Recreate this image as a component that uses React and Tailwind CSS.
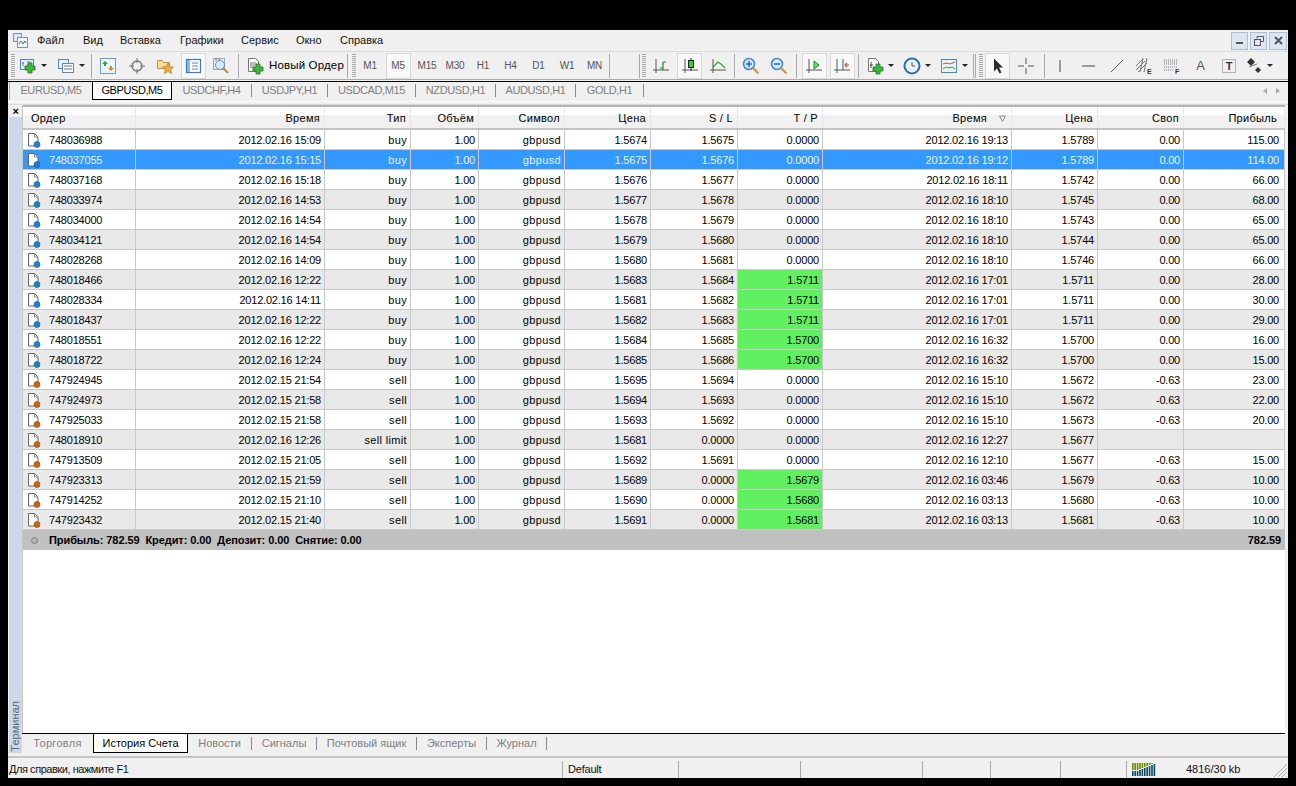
import React from "react";

const MENU = ["Файл", "Вид", "Вставка", "Графики", "Сервис", "Окно", "Справка"];
const MENU_W = ["w-[46px]", "w-[37px]", "w-[60px]", "w-[61px]", "w-[55px]", "w-[44px]", "w-[60px]"];
const CHART_TABS = ["USDCHF,H4", "USDJPY,H1", "USDCAD,M15", "NZDUSD,H1", "AUDUSD,H1", "GOLD,H1"];
const CHART_TAB_W = ["w-[80px]", "w-[76px]", "w-[88px]", "w-[80px]", "w-[80px]", "w-[68px]"];
const BOTTOM_TABS = ["Новости", "Сигналы", "Почтовый ящик", "Эксперты", "Журнал"];
const BOTTOM_TAB_W = ["w-[64px]", "w-[65px]", "w-[100px]", "w-[70px]", "w-[60px]"];

const GRID = "grid grid-cols-[113px_189px_86px_68px_86px_86px_87px_85px_189px_86px_86px_101px]";
const HEAD = ["Время", "Тип", "Объём", "Символ", "Цена", "S / L", "T / P", "Время", "Цена", "Своп", "Прибыль"];

const ROWS = [
  ["748036988", "2012.02.16 15:09", "buy", "1.5674", "1.5675", "0.0000", "2012.02.16 19:13", "1.5789", "0.00", "115.00"],
  ["748037055", "2012.02.16 15:15", "buy", "1.5675", "1.5676", "0.0000", "2012.02.16 19:12", "1.5789", "0.00", "114.00"],
  ["748037168", "2012.02.16 15:18", "buy", "1.5676", "1.5677", "0.0000", "2012.02.16 18:11", "1.5742", "0.00", "66.00"],
  ["748033974", "2012.02.16 14:53", "buy", "1.5677", "1.5678", "0.0000", "2012.02.16 18:10", "1.5745", "0.00", "68.00"],
  ["748034000", "2012.02.16 14:54", "buy", "1.5678", "1.5679", "0.0000", "2012.02.16 18:10", "1.5743", "0.00", "65.00"],
  ["748034121", "2012.02.16 14:54", "buy", "1.5679", "1.5680", "0.0000", "2012.02.16 18:10", "1.5744", "0.00", "65.00"],
  ["748028268", "2012.02.16 14:09", "buy", "1.5680", "1.5681", "0.0000", "2012.02.16 18:10", "1.5746", "0.00", "66.00"],
  ["748018466", "2012.02.16 12:22", "buy", "1.5683", "1.5684", "1.5711", "2012.02.16 17:01", "1.5711", "0.00", "28.00"],
  ["748028334", "2012.02.16 14:11", "buy", "1.5681", "1.5682", "1.5711", "2012.02.16 17:01", "1.5711", "0.00", "30.00"],
  ["748018437", "2012.02.16 12:22", "buy", "1.5682", "1.5683", "1.5711", "2012.02.16 17:01", "1.5711", "0.00", "29.00"],
  ["748018551", "2012.02.16 12:22", "buy", "1.5684", "1.5685", "1.5700", "2012.02.16 16:32", "1.5700", "0.00", "16.00"],
  ["748018722", "2012.02.16 12:24", "buy", "1.5685", "1.5686", "1.5700", "2012.02.16 16:32", "1.5700", "0.00", "15.00"],
  ["747924945", "2012.02.15 21:54", "sell", "1.5695", "1.5694", "0.0000", "2012.02.16 15:10", "1.5672", "-0.63", "23.00"],
  ["747924973", "2012.02.15 21:58", "sell", "1.5694", "1.5693", "0.0000", "2012.02.16 15:10", "1.5672", "-0.63", "22.00"],
  ["747925033", "2012.02.15 21:58", "sell", "1.5693", "1.5692", "0.0000", "2012.02.16 15:10", "1.5673", "-0.63", "20.00"],
  ["748018910", "2012.02.16 12:26", "sell limit", "1.5681", "0.0000", "0.0000", "2012.02.16 12:27", "1.5677", "", ""],
  ["747913509", "2012.02.15 21:05", "sell", "1.5692", "1.5691", "0.0000", "2012.02.16 12:10", "1.5677", "-0.63", "15.00"],
  ["747923313", "2012.02.15 21:59", "sell", "1.5689", "0.0000", "1.5679", "2012.02.16 03:46", "1.5679", "-0.63", "10.00"],
  ["747914252", "2012.02.15 21:10", "sell", "1.5690", "0.0000", "1.5680", "2012.02.16 03:13", "1.5680", "-0.63", "10.00"],
  ["747923432", "2012.02.15 21:40", "sell", "1.5691", "0.0000", "1.5681", "2012.02.16 03:13", "1.5681", "-0.63", "10.00"],
];

function Svg({ children, w = 18, h = 18 }) {
  return (
    <svg width={w} height={h} viewBox={`0 0 ${w} ${h}`} className="shrink-0" fill="none">
      {children}
    </svg>
  );
}

const Plus = ({ x = 8, y = 8 }) => (
  <path
    d={`M${x + 3} ${y}h4v3h3v4h-3v3h-4v-3h-3v-4h3z`}
    fill="#3fb53f"
    stroke="#1c7a1c"
    strokeWidth="0.8"
  />
);

const Axes = ({ c = "#555" }) => <path d="M4 2v14M1 13h16" stroke={c} strokeWidth="1" />;

const ICONS = {
  newChart: (
    <Svg>
      <rect x="1.5" y="2.5" width="13" height="10" fill="#e6f0fa" stroke="#5b86b3" />
      <path d="M4 5v4M3 6h2M8 5h4M8 8h3" stroke="#5b86b3" />
      <Plus x={6} y={6} />
    </Svg>
  ),
  profiles: (
    <Svg>
      <rect x="1.5" y="2.5" width="10" height="9" fill="#e6f0fa" stroke="#5b86b3" />
      <rect x="5.5" y="6.5" width="11" height="9" fill="#f4f8fc" stroke="#5b86b3" />
      <path d="M7 9h8M7 12h8" stroke="#7c7c7c" />
    </Svg>
  ),
  market: (
    <Svg>
      <rect x="1.5" y="1.5" width="15" height="15" fill="#eaf3fb" stroke="#6b9ac4" />
      <path d="M6 4l3 3H7v2H5V7H3z" fill="#2f9e2f" />
      <path d="M12 14l3-3h-2V9h-2v2H9z" fill="#d9822b" />
    </Svg>
  ),
  nav: (
    <Svg>
      <circle cx="9" cy="9" r="5" stroke="#777" strokeWidth="1.4" />
      <path d="M9 1v5M9 12v5M1 9h5M12 9h5" stroke="#777" />
    </Svg>
  ),
  fav: (
    <Svg>
      <path d="M1.5 3.5h5l1 2h6v6h-12z" fill="#f6dc8c" stroke="#b9954a" />
      <path d="M12 6l1.8 3.6 3.7.5-2.7 2.6.7 3.8-3.5-1.9-3.5 1.9.7-3.8-2.7-2.6 3.7-.5z" fill="#f0a848" stroke="#b67a2a" strokeWidth="0.7" />
    </Svg>
  ),
  terminal: (
    <Svg>
      <rect x="2.5" y="2.5" width="14" height="13" fill="#fff" stroke="#3f79b5" strokeWidth="1.2" />
      <path d="M3 3h3v12H3z" fill="#8fb8de" />
      <path d="M8 6h6M8 9h6M8 12h6" stroke="#5b86b3" />
    </Svg>
  ),
  tester: (
    <Svg>
      <rect x="1.5" y="1.5" width="11" height="11" fill="#e9eef3" stroke="#9aa7b3" />
      <circle cx="8" cy="8" r="4.5" fill="#d8e9f7" stroke="#6b8fb0" />
      <path d="M11 11l5 5" stroke="#c08a3a" strokeWidth="2" />
      <path d="M4 1v3M7 1v3" stroke="#7a7a7a" />
    </Svg>
  ),
  newOrder: (
    <Svg>
      <path d="M2.5 1.5h7l3 3v10h-10z" fill="#fff" stroke="#777" />
      <path d="M4 6h6M4 8h6M4 10h4" stroke="#777" />
      <Plus x={7} y={7} />
    </Svg>
  ),
  bar: (
    <Svg>
      <Axes />
      <path d="M11 5v8M11 5h3M8 11h3" stroke="#1f8a1f" strokeWidth="1.2" />
    </Svg>
  ),
  candle: (
    <Svg>
      <Axes />
      <path d="M10 1v13" stroke="#333" />
      <rect x="7.5" y="3.5" width="5" height="7" fill="#35d135" stroke="#222" />
    </Svg>
  ),
  line: (
    <Svg>
      <Axes />
      <path d="M4 10l5-5 3 2 4 4" stroke="#2f9e2f" strokeWidth="1.2" />
    </Svg>
  ),
  zoomIn: (
    <Svg>
      <circle cx="7" cy="7" r="5.5" fill="#d3e8fa" stroke="#3f86c8" strokeWidth="1.5" />
      <path d="M11 11l5.5 5.5" stroke="#cf9a3e" strokeWidth="2.4" />
      <path d="M4 7h6M7 4v6" stroke="#2f6fae" strokeWidth="1.6" />
    </Svg>
  ),
  zoomOut: (
    <Svg>
      <circle cx="7" cy="7" r="5.5" fill="#d3e8fa" stroke="#3f86c8" strokeWidth="1.5" />
      <path d="M11 11l5.5 5.5" stroke="#cf9a3e" strokeWidth="2.4" />
      <path d="M4 7h6" stroke="#2f6fae" strokeWidth="1.6" />
    </Svg>
  ),
  scroll: (
    <Svg>
      <Axes />
      <path d="M9 4l5 4-5 4z" fill="#6fd86f" stroke="#1f8a1f" />
    </Svg>
  ),
  shift: (
    <Svg>
      <Axes />
      <path d="M10 2v11" stroke="#3a55a5" />
      <path d="M16 8h-4M12 8l2-2M12 8l2 2" stroke="#c05a20" strokeWidth="1.2" />
    </Svg>
  ),
  indicator: (
    <Svg>
      <path d="M2.5 1.5h7l3 3v10h-10z" fill="#fff" stroke="#777" />
      <path d="M6 5c-1 0-1 1-1 2v4M4 8h3" stroke="#444" />
      <Plus x={7} y={7} />
    </Svg>
  ),
  clock: (
    <Svg>
      <circle cx="9" cy="9" r="7.5" fill="#e8f2fb" stroke="#2f6fae" strokeWidth="2" />
      <path d="M9 5v4h3" stroke="#555" />
    </Svg>
  ),
  template: (
    <Svg>
      <rect x="1.5" y="2.5" width="15" height="13" fill="#eaf3fb" stroke="#4f86b8" />
      <path d="M3 7l4-1 3 1 5-2" stroke="#b5562a" />
      <path d="M3 12l3-2 3 1 3-1 3 2" stroke="#2f9e2f" />
    </Svg>
  ),
  cursor: (
    <Svg>
      <path d="M5 1.5v13l3-3 2.5 5 2-1-2.5-5h4z" fill="#2b2b2b" />
    </Svg>
  ),
  cross: (
    <Svg>
      <path d="M9 1v6M9 11v6M1 9h6M11 9h6" stroke="#555" />
    </Svg>
  ),
  vline: (
    <Svg>
      <path d="M9 3v12" stroke="#444" />
    </Svg>
  ),
  hline: (
    <Svg>
      <path d="M2 9h13" stroke="#444" />
    </Svg>
  ),
  trend: (
    <Svg>
      <path d="M3 15L15 3" stroke="#555" />
    </Svg>
  ),
  channel: (
    <Svg>
      <path d="M1 9L8 2M1 13l9-9M3 15l9-9M8 1L5 15M12 1L9 15" stroke="#777" />
      <text x="12" y="17" fontSize="7" fontWeight="700" fill="#333" fontFamily="Liberation Sans, sans-serif">E</text>
    </Svg>
  ),
  fibo: (
    <Svg>
      <path d="M1 3h14M1 5h14M1 7h14M1 10h14M1 13h10" stroke="#777" strokeDasharray="1 1" />
      <text x="12" y="17" fontSize="7" fontWeight="700" fill="#333" fontFamily="Liberation Sans, sans-serif">F</text>
    </Svg>
  ),
  label: (
    <Svg>
      <rect x="2.5" y="2.5" width="13" height="13" stroke="#777" strokeDasharray="1 1" />
      <text x="9" y="13" fontSize="11" fontWeight="700" fill="#333" textAnchor="middle" fontFamily="Liberation Sans, sans-serif">T</text>
    </Svg>
  ),
  arrows: (
    <Svg>
      <path d="M6 1l4 4-4 4-4-4z" fill="#333" />
      <path d="M4 10l8-3" stroke="#777" />
      <path d="M13 10l3 3-3 3-3-3z" fill="#333" />
    </Svg>
  ),
};

const Caret = () => <span className="block w-0 h-0 shrink-0 border-x-[3px] border-x-transparent border-t-[3px] border-t-[#222]" />;

function Tool({ icon, width, active }) {
  return (
    <div className={`h-[26px] shrink-0 flex items-center justify-center ${width}`}>
      <div className={`w-[25px] h-[26px] shrink-0 flex items-center justify-center ${active ? "bg-[#f8f8f8] border border-[#d8d8d8]" : ""}`}>
        {ICONS[icon]}
      </div>
    </div>
  );
}

function Drop({ icon, width, pad }) {
  return (
    <div className={`h-[26px] shrink-0 flex items-center ${width} ${pad}`}>
      {ICONS[icon]}
      <span className="ml-[4px]">
        <Caret />
      </span>
    </div>
  );
}

const Sep = ({ width }) => (
  <div className={`h-[24px] shrink-0 flex justify-center ${width}`}>
    <div className="w-px h-full bg-[#a8a8a8]" />
  </div>
);

const Gripper = () => (
  <div className="h-[24px] w-[7px] shrink-0 flex justify-center">
    <div className="w-[4px] h-full bg-[repeating-linear-gradient(to_bottom,#a9a9a9_0,#a9a9a9_1px,transparent_1px,transparent_2px)]" />
  </div>
);

function Period({ label, width, active }) {
  return (
    <div className={`h-[26px] shrink-0 flex items-center justify-center ${width}`}>
      <div className={`h-[26px] w-[25px] shrink-0 flex items-center justify-center text-[10px] text-[#555] ${active ? "bg-[#f8f8f8] border border-[#d8d8d8]" : ""}`}>
        {label}
      </div>
    </div>
  );
}

function Toolbar() {
  return (
    <div className="h-[29px] mb-[1px] shrink-0 flex items-center bg-[#f0f0f0] border-y border-t-[#dcdcdc] border-b-[#a8a8a8]">
      <div className="w-[1px] shrink-0" />
      <Gripper />
      <Drop icon="newChart" width="w-[36px]" pad="pl-[3px]" />
      <Drop icon="profiles" width="w-[37px]" pad="pl-[5px]" />
      <Sep width="w-[5px]" />
      <Tool icon="market" width="w-[28px]" />
      <Tool icon="nav" width="w-[29px]" />
      <Tool icon="fav" width="w-[28px]" />
      <Tool icon="terminal" width="w-[28px]" active />
      <Tool icon="tester" width="w-[28px]" />
      <Sep width="w-[6px]" />
      <div className="h-[26px] w-[104px] shrink-0 flex items-center pl-[5px]">
        {ICONS.newOrder}
        <span className="ml-[5px] whitespace-nowrap text-[11.5px] tracking-[0.15px] text-black">Новый Ордер</span>
      </div>
      <Sep width="w-[5px]" />
      <Gripper />
      <Period label="M1" width="w-[26px]" />
      <Period label="M5" width="w-[30px]" active />
      <Period label="M15" width="w-[28px]" />
      <Period label="M30" width="w-[28px]" />
      <Period label="H1" width="w-[28px]" />
      <Period label="H4" width="w-[27px]" />
      <Period label="D1" width="w-[29px]" />
      <Period label="W1" width="w-[28px]" />
      <Period label="MN" width="w-[27px]" />
      <Sep width="w-[2px]" />
      <div className="w-[28px] shrink-0" />
      <Sep width="w-[2px]" />
      <Gripper />
      <Tool icon="bar" width="w-[28px]" />
      <Tool icon="candle" width="w-[29px]" active />
      <Tool icon="line" width="w-[28px]" />
      <Sep width="w-[5px]" />
      <Tool icon="zoomIn" width="w-[28px]" />
      <Tool icon="zoomOut" width="w-[28px]" />
      <Sep width="w-[7px]" />
      <Tool icon="scroll" width="w-[28px]" active />
      <Tool icon="shift" width="w-[28px]" active />
      <Sep width="w-[5px]" />
      <Drop icon="indicator" width="w-[37px]" pad="pl-[5px]" />
      <Drop icon="clock" width="w-[37px]" pad="pl-[5px]" />
      <Drop icon="template" width="w-[37px]" pad="pl-[5px]" />
      <Sep width="w-[2px]" />
      <Sep width="w-[3px]" />
      <Gripper />
      <Tool icon="cursor" width="w-[27px]" active />
      <Tool icon="cross" width="w-[30px]" />
      <Sep width="w-[6px]" />
      <Tool icon="vline" width="w-[26px]" />
      <Tool icon="hline" width="w-[31px]" />
      <Tool icon="trend" width="w-[26px]" />
      <Tool icon="channel" width="w-[28px]" />
      <Tool icon="fibo" width="w-[28px]" />
      <div className="w-[29px] h-[26px] shrink-0 flex items-center justify-center text-[13px] text-[#555]">A</div>
      <Tool icon="label" width="w-[27px]" />
      <Drop icon="arrows" width="w-[32px]" pad="pl-[3px]" />
    </div>
  );
}

function OrderIcon({ sell }) {
  return (
    <svg width="14" height="16" viewBox="0 0 14 16" className="shrink-0" fill="none">
      <path d="M1.5 1.5h6l3.5 3.5v9h-9.5z" fill="#fff" stroke="#666" />
      <path d="M7.5 1.5V5H11" stroke="#888" />
      <circle cx="10" cy="12.5" r="3" fill={sell ? "#c9660f" : "#1f7fd0"} stroke={sell ? "#8a4408" : "#155a96"} strokeWidth="0.6" />
    </svg>
  );
}

function Cell({ children, green, word, last }) {
  return (
    <div
      className={`h-[20px] flex items-center justify-end pt-[1px] border-r border-b border-[#c8c8c8] ${last ? "pr-[5px]" : "pr-[3px]"} ${green ? "bg-[#60f060]" : ""} ${word ? "tracking-[0.35px]" : ""}`}
    >
      {children}
    </div>
  );
}

function Row({ row, index }) {
  const [order, open, type, price, sl, tp, close, closePrice, swap, profit] = row;
  const selected = index === 1;
  const sell = type.startsWith("sell");
  const bg = selected ? "bg-[#3399ff] text-[#e6f2ff]" : index % 2 ? "bg-[#e9e9e9] text-black" : "bg-white text-black";
  return (
    <div className={`${GRID} ${bg}`}>
      <div className="h-[20px] flex items-center pl-[4px] border-r border-b border-[#c8c8c8]">
        <OrderIcon sell={sell} />
        <span className="ml-[8px] pt-[1px]">{order}</span>
      </div>
      <Cell>{open}</Cell>
      <Cell word>{type}</Cell>
      <Cell>1.00</Cell>
      <Cell word>gbpusd</Cell>
      <Cell>{price}</Cell>
      <Cell>{sl}</Cell>
      <Cell green={tp !== "0.0000"}>{tp}</Cell>
      <Cell>{close}</Cell>
      <Cell>{closePrice}</Cell>
      <Cell>{swap}</Cell>
      <Cell last>{profit}</Cell>
    </div>
  );
}

function TableHeader() {
  return (
    <div className={`${GRID} h-[25px] border-t-2 border-t-[#b4b4b4] border-b-2 border-b-[#c4c4c4] bg-[linear-gradient(to_bottom,#ffffff_0,#ffffff_40%,#f1f1f1_40%,#f1f1f1_100%)] tracking-[0.3px]`}>
      <div className="flex items-center pl-[8px] pt-[1px] border-r border-[#e8e8e8]">Ордер</div>
      {HEAD.map((h, i) => (
        <div key={i} className={`flex items-center justify-end pt-[1px] border-r border-[#e8e8e8] ${i === 10 ? "pr-[7px]" : "pr-[4px]"}`}>
          {h}
          {i === 7 && (
            <svg width="7" height="7" viewBox="0 0 7 7" className="ml-[12px] mr-[1px] shrink-0" fill="none">
              <path d="M0.5 1h6L3.5 6.5z" stroke="#8a8a8a" />
            </svg>
          )}
        </div>
      ))}
    </div>
  );
}

function StatusCell({ width, children }) {
  return <div className={`h-[17px] shrink-0 flex items-center border-l border-[#a8a8a8] pl-[5px] ${width}`}>{children}</div>;
}

function SignalBars() {
  const bars = [6, 6, 6, 7, 8, 9, 10, 11, 12, 13];
  return (
    <svg width="24" height="13" viewBox="0 0 24 13" className="shrink-0">
      {bars.map((b, i) => (
        <g key={i}>
          <rect x={i * 2.4} y="0" width="1.6" height={13 - b} fill="#6f8a00" />
          <rect x={i * 2.4} y={13 - b + 1} width="1.6" height={b - 1} fill="#0d4a66" />
        </g>
      ))}
    </svg>
  );
}

export default function App() {
  return (
    <div className="w-[1296px] h-[786px] bg-black pt-[30px] px-[8px] pb-[8px] overflow-hidden text-[11px] leading-none text-black font-['Liberation_Sans','Noto_Sans',sans-serif] tracking-[-0.2px]">
      <div className="h-[748px] flex flex-col bg-[#f0f0f0] overflow-hidden">
        {/* menu */}
        <div className="h-[21px] flex items-center pl-[5px] shrink-0">
          <svg width="15" height="15" viewBox="0 0 15 15" className="shrink-0" fill="none">
            <rect x="0.5" y="0.5" width="8" height="8" fill="#dbe9f7" stroke="#6f95bd" />
            <rect x="4.5" y="4.5" width="10" height="10" fill="#f3f8fc" stroke="#6f95bd" />
            <path d="M6 11l2-3 2 3 2-3 1 2" stroke="#4a6d92" />
          </svg>
          <div className="flex ml-[8px] text-[#111] tracking-normal">
            {MENU.map((m, i) => (
              <span key={m} className={`pl-[1px] ${MENU_W[i]}`}>
                {m}
              </span>
            ))}
          </div>
          <div className="ml-auto mr-[1px] flex gap-[2px]">
            <div className="w-[17px] h-[18px] flex items-end justify-center pb-[5px] border border-[#a9c0d8] bg-[#dbe6f2]">
              <span className="block w-[7px] h-[2px] bg-[#555]" />
            </div>
            <div className="w-[17px] h-[18px] flex items-center justify-center border border-[#a9c0d8] bg-[#dbe6f2]">
              <svg width="10" height="10" viewBox="0 0 10 10" fill="none">
                <path d="M3 2.5V.5h6.5v5H7" stroke="#555" />
                <rect x="0.5" y="3.5" width="6" height="6" stroke="#555" />
              </svg>
            </div>
            <div className="w-[18px] h-[18px] flex items-center justify-center border border-[#a9c0d8] bg-[#dbe6f2]">
              <svg width="9" height="9" viewBox="0 0 9 9" fill="none">
                <path d="M1 1l7 7M8 1L1 8" stroke="#555" strokeWidth="2" />
              </svg>
            </div>
          </div>
        </div>

        <Toolbar />

        {/* chart tabs */}
        <div className="h-[21px] shrink-0 flex items-start border-t border-b border-t-black border-b-white pl-[1px] bg-[#f0f0f0] text-[#808080] tracking-[-0.4px]">
          <div className="w-[83px] h-[18px] pb-[1px] flex items-center justify-center border-l border-[#a8a8a8]">EURUSD,M5</div>
          <div className="w-[80px] h-[18px] pb-[1px] flex items-center justify-center bg-white text-black border-x border-b border-black">GBPUSD,M5</div>
          {CHART_TABS.map((t, i) => (
            <div key={t} className={`h-[18px] pb-[1px] flex items-center justify-center ${CHART_TAB_W[i]}`}>
              <span className="flex-1 text-center">{t}</span>
              <span className="w-px h-[13px] bg-[#8a8a8a]" />
            </div>
          ))}
          <div className="ml-auto h-[18px] pr-[8px] flex items-center gap-[9px]">
            <span className="w-0 h-0 border-y-[3px] border-y-transparent border-r-[4px] border-r-[#aaa]" />
            <span className="w-0 h-0 border-y-[3px] border-y-transparent border-l-[4px] border-l-[#aaa]" />
          </div>
        </div>

        {/* terminal */}
        <div className="flex-1 min-h-0 flex border-t border-[#dcdcdc] mt-[2px]">
          <div className="w-[14px] shrink-0 flex flex-col pl-[1px]">
            <div className="h-[12px] flex items-center justify-center text-[11px] font-bold leading-none">×</div>
            <div className="flex-1 bg-[#c9d9e8] flex items-end justify-center pb-[1px]">
              <span className="[writing-mode:vertical-rl] rotate-180 text-[11px] tracking-normal text-[#5a6a78]">Терминал</span>
            </div>
          </div>
          <div className="flex-1 min-w-0 flex flex-col pr-[3px]">
            <div className="flex-1 bg-white border-l border-[#c8c8c8] overflow-hidden">
              <TableHeader />
              {ROWS.map((r, i) => (
                <Row key={r[0]} row={r} index={i} />
              ))}
              <div className="h-[20px] flex items-center bg-[#c0c0c0] font-bold pl-[8px] pr-[4px] tracking-[-0.08px]">
                <span className="w-[7px] h-[7px] shrink-0 rounded-full border border-[#808080] bg-[#b4b4b4] mr-[11px]" />
                <span className="whitespace-pre">Прибыль: 782.59  Кредит: 0.00  Депозит: 0.00  Снятие: 0.00</span>
                <span className="ml-auto">782.59</span>
              </div>
            </div>
            {/* terminal tabs */}
            <div className="h-[20px] shrink-0 flex border-t border-black text-[#808080] tracking-normal">
              <div className="w-[71px] flex items-center justify-center tracking-[0.3px]">Торговля</div>
              <div className="w-[95px] h-[19px] flex items-center justify-center bg-white text-black border-x border-b border-black">История Счета</div>
              {BOTTOM_TABS.map((t, i) => (
                <div key={t} className={`flex items-center ${BOTTOM_TAB_W[i]}`}>
                  <span className="flex-1 text-center">{t}</span>
                  <span className="w-px h-[13px] bg-[#8a8a8a]" />
                </div>
              ))}
            </div>
          </div>
        </div>

        {/* status bar */}
        <div className="h-[22px] shrink-0 mt-[3px] border-t-2 border-[#c4c4c4] flex items-center pl-[1px] pt-[2px] text-[#111]">
          <span className="w-[553px] shrink-0 tracking-[-0.45px]">Для справки, нажмите F1</span>
          <StatusCell width="w-[116px]">Default</StatusCell>
          <StatusCell width="w-[122px]" />
          <StatusCell width="w-[122px]" />
          <StatusCell width="w-[68px]" />
          <StatusCell width="w-[70px]" />
          <StatusCell width="w-[66px]" />
          <StatusCell width="w-[130px]">
            <SignalBars />
            <span className="ml-[30px] tracking-normal">4816/30 kb</span>
          </StatusCell>
          <svg width="15" height="15" viewBox="0 0 15 15" className="ml-auto self-end shrink-0" fill="none">
            <path d="M14 1L1 14M14 5l-9 9M14 9l-5 5M14 13l-1 1" stroke="#a8a8a8" />
          </svg>
        </div>
      </div>
    </div>
  );
}
